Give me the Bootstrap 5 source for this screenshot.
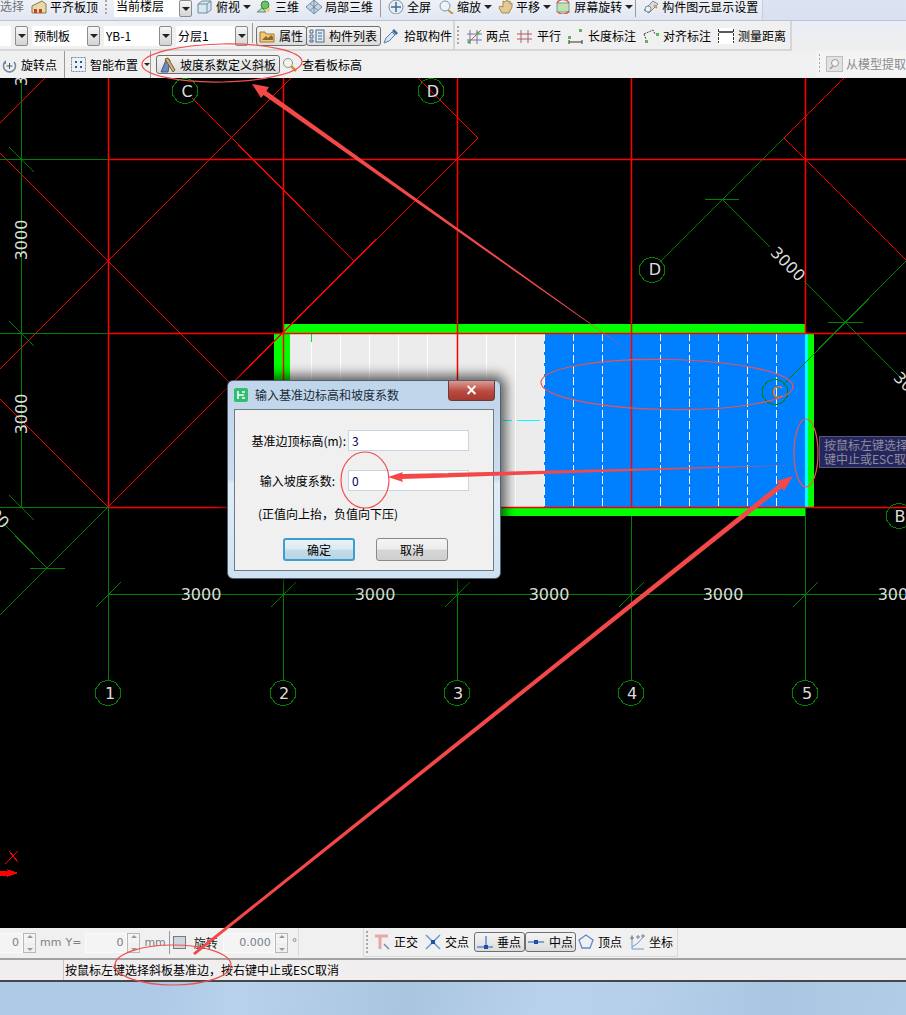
<!DOCTYPE html>
<html lang="zh">
<head>
  <meta charset="utf-8">
  <title>输入基准边标高和坡度系数</title>
  <link href="https://cdn.jsdelivr.net/npm/bootstrap@5.3.0/dist/css/bootstrap.min.css" rel="stylesheet">
  <style>
    html, body { height: 1015px; overflow: hidden; }
    body { background: #000; font: 12px/16px "Noto Sans CJK SC", "DejaVu Sans", sans-serif; color: #000; }
    .app-page { position: relative; height: 1015px; width: 906px; }
    .tb-row { display: flex; flex-shrink: 0; white-space: nowrap; overflow: hidden; }
    .tb-row svg { flex-shrink: 0; display: block; }
    .tb-row > *, .tb-one-bar > *, .tb-two-a > *, .tb-two-b > *, .bottom-left > *, .bottom-right > * { flex-shrink: 0; }
    .tb-one { height: 21px; background: linear-gradient(#dde3f2, #d9e0f0); border-bottom: 1px solid #b9c3da; }
    .tb-one-bar { width: 763px; height: 20px; display: flex; gap: 7px; background: linear-gradient(#eff1f6, #e1e6f2); border-right: 1px solid #c6cde0; }
    .tb-one-bar > * { height: 14px; line-height: 12px; }
    .tb-two { height: 30px; background: linear-gradient(#eaedf5, #efefef); }
    .tb-two-a { display: flex; align-items: center; gap: 4px; width: 453px; padding-top: 2px; background: #f0f0f0; border-bottom: 2px solid #d6d6d6; }
    .tb-two-b { display: flex; align-items: center; gap: 7px; width: 339px; padding-top: 2px; background: #f0f0f0; border: solid #d6d6d6; border-width: 0 2px 2px 2px; }
    .tb-three { height: 27px; background: #f0f0f0; align-items: center; gap: 7px; }
    .tb-three-right { height: 26px; width: 90px; background: #f4f4f4; display: flex; align-items: center; gap: 3px; color: #8a8a8a; align-self: flex-start; }
    .tool-item { display: flex; align-items: center; gap: 3px; }
    .tool-on { display: flex; align-items: center; gap: 3px; height: 20px; padding: 0 2px; border: 1px solid #6f6f6f; border-radius: 3px; background: linear-gradient(#f4f4f4, #dcdcdc); }
    .tool-grip { width: 2px; align-self: stretch; margin: 3px 0; background: repeating-linear-gradient(#a8a8a8 0 2px, transparent 2px 4px); }
    .tool-sep { width: 1px; align-self: stretch; margin: 3px 0; background: #9a9a9a; }
    .combo-box { display: flex; align-items: center; padding-left: 2px; background: #fff; height: 20px; }
    .combo-arrow { display: flex; align-items: center; justify-content: center; width: 13px; height: 20px; border: 1px solid #8c8c8c; border-radius: 2px; background: linear-gradient(#f6f6f6, #d4d4d4); }
    .caret-down { width: 0; height: 0; border: 4px solid transparent; border-top: 4px solid #222; border-bottom: 0; }
    .cad-area { position: relative; height: 850px; flex-shrink: 0; background: #000; overflow: hidden; }
    .cad-area > svg { display: block; shape-rendering: crispEdges; }
    .cad-area > svg .beam-line { shape-rendering: geometricPrecision; stroke-width: 1.500; }
    .cad-label { font: 16px "DejaVu Sans", sans-serif; fill: #dcdcdc; }
    .tip-box { position: absolute; left: 819px; top: 358px; width: 100px; height: 32px; padding: 1px 4px; background: #26265e; border: 1px solid #55557e; color: #8d8d9c; line-height: 14px; white-space: nowrap; overflow: hidden; }
    .dlg-window { position: absolute; left: 227px; top: 302px; width: 274px; height: 199px; padding: 0 6px 7px; display: flex; flex-direction: column; border-radius: 6px; border: 1px solid #50606f; background: linear-gradient(#bfd5ea, #cbdeef 50%, #e0edf7 52%, #cfe2f2); box-shadow: 0 0 12px 5px rgba(0, 0, 0, .6); }
    .dlg-title { height: 28px; display: flex; align-items: center; gap: 7px; flex-shrink: 0; color: #1a2a3a; }
    .dlg-close { width: 47px; height: 20px; margin-left: auto; margin-right: -1px; align-self: flex-start; display: flex; align-items: center; justify-content: center; color: #fff; font: bold 15px/1 "DejaVu Sans", sans-serif; border: 1px solid #6c3a38; border-top: 0; border-radius: 0 0 4px 4px; background: linear-gradient(#dd9a94, #b84a40 55%, #a63a30); }
    .dlg-panel { flex-grow: 1; padding-top: 20px; background: #f0f0f0; border: 1px solid #6f7b85; }
    .dlg-line { display: flex; align-items: center; gap: 2px; height: 21px; margin-bottom: 19px; }
    .dlg-label { width: 111px; text-align: right; white-space: nowrap; }
    .dlg-label-short { padding-right: 11px; }
    .dlg-input.form-control { width: 121px; height: 21px; min-height: 0; padding: 0 3px; font-size: 12px; border-radius: 0; border: 1px solid #c8d6e4; color: #00005a; box-shadow: none; }
    .dlg-note { margin: -4px 0 0 23px; height: 16px; }
    .dlg-buttons { display: flex; gap: 21px; margin: 16px 0 0 48px; }
    .dlg-btn.btn { width: 72px; height: 23px; padding: 0; font-size: 12px; line-height: 20px; color: #000; border-radius: 3px; border: 1px solid #8a8a8a; background: linear-gradient(#f4f4f4, #ececec 48%, #d6d6d6 52%, #cfcfcf); }
    .dlg-btn-main.btn { border-color: #3c9ed2; border-width: 2px; background: linear-gradient(#e8f2f8, #dceaf3 48%, #c6dbe8 52%, #bcd4e4); line-height: 18px; }
    .bottom-bar { height: 30px; flex-shrink: 0; background: #f0f0f0; align-items: center; gap: 0; color: #7a8088; font-family: "DejaVu Sans", sans-serif; }
    .bottom-left { display: flex; align-items: center; width: 299px; height: 29px; font-size: 11px; border-right: 1px solid #dadada; align-self: flex-start; }
    .num-box { height: 20px; background: #f4f4f4; border: 1px solid #fbfbfb; text-align: right; padding-right: 3px; line-height: 18px; }
    .spin-box { width: 13px; height: 20px; border: 1px solid #b8b8b8; background: linear-gradient(#f4f4f4 0 48%, #b8b8b8 48% 52%, #f0f0f0 52%); position: relative; }
    .spin-box::before, .spin-box::after { content: ""; position: absolute; left: 3px; border: 3px solid transparent; }
    .spin-box::before { top: 1px; border-bottom-color: #9a9a9a; border-top: 0; }
    .spin-box::after { bottom: 1px; border-top-color: #9a9a9a; border-bottom: 0; }
    .check-box.form-check-input { width: 13px; height: 13px; margin: 0 8px 0 3px; border-radius: 0; border: 1px solid #7a7a7a; background: #cfd6e0; }
    .bottom-rotate { font-family: "Noto Sans CJK SC", sans-serif; font-size: 12px; color: #222; }
    .bottom-right { display: flex; align-items: center; width: 315px; height: 29px; margin-left: 64px; border: solid #dadada; border-width: 0 1px 1px 1px; color: #000; font-family: "Noto Sans CJK SC", sans-serif; align-self: flex-start; }
    .status-bar { height: 24px; flex-shrink: 0; display: flex; background: #f0eeee; border-top: 2px solid #a2a2a2; border-bottom: 2px solid #474747; white-space: nowrap; }
    .status-first { width: 64px; border-right: 1px solid #c8c8c8; }
    .status-text { padding-left: 1px; line-height: 20px; }
    .desktop-strip { flex-grow: 1; background: linear-gradient(100deg, #aecae6 0 18%, #b8d2ec 26%, #aac5e0 45%, #b8d2ec 60%, #b6d0ea 70%, #aac6e2 85%, #b0cce6); }
    .note-layer { position: absolute; left: 0; top: 0; pointer-events: none; }
  </style>
</head>
<body>
<div class="app-page d-flex flex-column">

  <!-- top toolbars -->
  <div class="tb-row tb-one">
    <div class="tb-one-bar">
      <span class="text-secondary">选择</span>
      <span class="tool-item"><svg width="16" height="14" viewBox="0 0 16 14"><path d="M1 13V6L11 1l4 3v9z" fill="#e8d9a8" stroke="#8a7a4a"/><path d="M3 9h3v4H3zM8 9h3v4H8z" fill="#c9402a"/></svg><span>平齐板顶</span></span>
      <span class="tool-grip m-0"></span>
      <span class="combo-box" style="width:65px;height:17px;align-items:flex-start">当前楼层</span>
      <span class="combo-arrow" style="height:17px;margin-left:-7px"><span class="caret-down"></span></span>
      <span class="tool-item" style="margin-left:-2px"><svg width="16" height="14" viewBox="0 0 16 14"><path d="M1 4l4-3h9v9l-4 3H1z" fill="#d8e6ee" stroke="#6d8ea3"/><path d="M1 4h9v9M10 4l4-3" fill="none" stroke="#6d8ea3"/></svg><span>俯视</span><span class="caret-down"></span></span>
      <span class="tool-item" style="margin-left:-2px"><svg width="16" height="14" viewBox="0 0 16 14"><circle cx="9" cy="5" r="4" fill="#6cc26a" stroke="#3b8a3c"/><path d="M1 12l5-4 4 4z" fill="#b9d9b0" stroke="#6a8a6a"/><circle cx="12" cy="10" r="2" fill="#f2d060"/></svg><span>三维</span></span>
      <span class="tool-item"><svg width="16" height="14" viewBox="0 0 16 14"><path d="M8 0l8 7-8 7-8-7z" fill="#c6d6e6" stroke="#6f8aa6"/><path d="M4 3.500l8 7M12 3.500l-8 7M8 0v14" stroke="#6f8aa6" fill="none"/></svg><span>局部三维</span></span>
      <span class="tool-sep m-0" style="height:17px"></span>
      <span class="tool-item"><svg width="16" height="14" viewBox="0 0 16 14"><circle cx="8" cy="7" r="7" fill="#e6edf3" stroke="#7f93a6"/><path d="M8 2v10M3 7h10" stroke="#3f6a9c" stroke-width="1.500"/></svg><span>全屏</span></span>
      <span class="tool-item"><svg width="16" height="14" viewBox="0 0 16 14"><circle cx="7" cy="6" r="5" fill="#eef3f7" stroke="#8096aa"/><path d="M10 10l5 4" stroke="#c49a3c" stroke-width="2"/></svg><span>缩放</span><span class="caret-down"></span></span>
      <span class="tool-item" style="margin-left:-2px"><svg width="16" height="14" viewBox="0 0 16 14"><path d="M2 8l3 5h7l3-6V3l-2 1V1l-2 1-1-2-2 2-2-1v6L3 6z" fill="#e3c995" stroke="#a58a55"/></svg><span>平移</span><span class="caret-down"></span></span>
      <span class="tool-item" style="margin-left:-3px"><svg width="16" height="14" viewBox="0 0 16 14"><rect x="2" y="3" width="12" height="9" fill="#bfe3a8" stroke="#6b9ab8"/><path d="M2 3a7 7 0 0 1 12 0M14 11a7 7 0 0 1-11 1" fill="none" stroke="#e25a3c" stroke-width="1.500"/></svg><span>屏幕旋转</span><span class="caret-down"></span></span>
      <span class="tool-sep m-0" style="height:17px;margin-left:-5px!important"></span>
      <span class="tool-item"><svg width="16" height="14" viewBox="0 0 16 14"><path d="M1 10l9-9 5 3-9 9z" fill="#d6dde6" stroke="#7e8a98"/><circle cx="5" cy="9" r="3" fill="#f0f0f0" stroke="#7e8a98"/><path d="M11 5l3 3" stroke="#d99a3a" stroke-width="2"/></svg><span>构件图元显示设置</span></span>
    </div>
  </div>

  <div class="tb-row tb-two">
    <div class="tb-two-a">
      <span class="combo-box" style="width:11px"></span>
      <span class="combo-arrow"><span class="caret-down"></span></span>
      <span class="combo-box" style="width:55px">预制板</span>
      <span class="combo-arrow" style="margin-left:-4px"><span class="caret-down"></span></span>
      <span class="combo-box" style="width:55px">YB-1</span>
      <span class="combo-arrow" style="margin-left:-4px"><span class="caret-down"></span></span>
      <span class="combo-box" style="width:59px">分层1</span>
      <span class="combo-arrow" style="margin-left:-4px"><span class="caret-down"></span></span>
      <span class="tool-sep m-0" style="height:20px"></span>
      <span class="tool-on" style="margin-left:-1px;gap:4px;width:51px"><svg width="16" height="14" viewBox="0 0 16 14"><path d="M1 3h5l1 2h8v8H1z" fill="#f0c878" stroke="#a8792c"/><path d="M3 11l4-4 2 2 3-3 2 2v3z" fill="#8a6a2a"/></svg>属性</span>
      <span class="tool-on" style="margin-left:-5px;width:75px;gap:4px"><svg width="16" height="14" viewBox="0 0 16 14"><path d="M1 1h3v3H1zM1 6h3v3H1zM1 11h3v2H1z" fill="none" stroke="#4a6a8c"/><rect x="7" y="1" width="8" height="12" fill="#dfe9f2" stroke="#4a6a8c"/><path d="M9 4h4M9 7h4M9 10h4" stroke="#4a6a8c"/></svg>构件列表</span>
      <span class="tool-item" style="margin-left:-2px;gap:5px"><svg width="16" height="16" viewBox="0 0 16 16"><path d="M1 15l2-5 6-6 3 3-6 6z" fill="#d9e6f2" stroke="#5c7ea6"/><path d="M9 3l2-2 4 4-2 2z" fill="#3a6ca8"/></svg>拾取构件</span>
    </div>
    <div class="tb-two-b">
      <span class="tool-grip" style="margin-left:2px"></span>
      <span class="tool-item" style="margin-left:1px;gap:4px"><svg width="15" height="15" viewBox="0 0 15 15"><path d="M3 1v14M10 1v14M0 5h15M0 11h15" stroke="#6c78a8" fill="none"/><path d="M1 14L14 1" stroke="#d05a4a"/><circle cx="2" cy="13" r="1.600" fill="#5aa84a"/><circle cx="11" cy="4" r="1.600" fill="#5aa84a"/></svg>两点</span>
      <span class="tool-item" style="gap:5px"><svg width="15" height="15" viewBox="0 0 15 15"><path d="M4 1v13M11 1v13" stroke="#6c78a8"/><path d="M0 5h15M0 10h15" stroke="#c8504a"/></svg>平行</span>
      <span class="tool-item" style="gap:5px"><svg width="15" height="15" viewBox="0 0 15 15"><path d="M1 11v4M14 11v4M1 13h13" stroke="#333" fill="none"/><rect x="0" y="7" width="3" height="3" fill="#5cb85c"/><rect x="11" y="0" width="3" height="3" fill="#5cb85c"/></svg>长度标注</span>
      <span class="tool-item"><svg width="17" height="15" viewBox="0 0 17 15"><rect x="2" y="11" width="3" height="3" fill="#5cb85c"/><rect x="13" y="4" width="3" height="3" fill="#5cb85c"/><path d="M1 5l2 5M1 5l9-4 2 4" stroke="#444" fill="none" stroke-dasharray="2 1"/></svg>对齐标注</span>
      <span class="tool-item" style="gap:4px"><svg width="16" height="16" viewBox="0 0 16 16"><rect width="16" height="16" fill="#fff"/><path d="M.5 1v14M15.500 1v14" stroke="#333" stroke-dasharray="3 1"/><path d="M1 4h14" stroke="#222" stroke-width="1.500"/></svg>测量距离</span>
    </div>
  </div>

  <div class="tb-row tb-three">
    <span class="tool-item" style="margin-left:2px;gap:4px"><svg width="15" height="16" viewBox="0 0 15 16"><path d="M3 5a6 6 0 1 0 9 0" fill="none" stroke="#6c86a8" stroke-width="1.500"/><path d="M7.500 6v6M4.500 9h6" stroke="#555"/><path d="M1 6l3-3v4z" fill="#6c86a8"/></svg>旋转点</span>
    <span class="tool-sep m-0"></span>
    <span class="tool-item" style="margin-left:-1px;gap:4px"><svg width="15" height="15" viewBox="0 0 15 15"><rect x=".5" y=".5" width="14" height="14" fill="#eef2f6" stroke="#7a8a9a" stroke-dasharray="2 1"/><path d="M4 4h2v2H4zM9 4h2v2H9zM4 9h2v2H4zM9 9h2v2H9z" fill="#2a5a8c"/></svg>智能布置<span class="caret-down" style="margin-left:2px;border-width:3px 3px 0"></span></span>
    <span class="tool-sep m-0" style="margin-left:-7px!important"></span>
    <span class="tool-on" style="width:124px;height:19px;padding:0 3px;gap:4px;margin-left:-2px"><svg width="16" height="16" viewBox="0 0 16 16"><path d="M1 15L6 3h4l-2 12z" fill="#6c8cc0" stroke="#3a5a8c"/><path d="M5 2l3-1 7 12-2 2z" fill="#d8b078" stroke="#7a5a2a"/></svg>坡度系数定义斜板</span>
    <span class="tool-item" style="margin-left:-5px;gap:4px"><svg width="16" height="16" viewBox="0 0 16 16"><circle cx="6" cy="6" r="4.500" fill="#f4f4e4" stroke="#7f93a6"/><path d="M9 9l5 5" stroke="#c49a3c" stroke-width="2.500"/></svg>查看板标高</span>
    <div class="tb-three-right ms-auto">
      <span class="tool-grip" style="margin-left:3px"></span>
      <svg style="margin-left:3px" width="17" height="16" viewBox="0 0 17 16"><rect x=".5" y=".5" width="16" height="15" fill="#e2e2e2" stroke="#bdbdbd"/><circle cx="9" cy="7" r="3.500" fill="#f4f4f4" stroke="#9a9a9a"/><path d="M7 10l-3 3" stroke="#9a9a9a" stroke-width="1.500"/></svg>
      <span>从模型提取</span>
    </div>
  </div>

  <!-- drawing area, svg uses screen coordinates -->
  <div class="cad-area">
    <svg width="906" height="850" viewBox="0 78 906 850">
      <defs>
        <polygon id="axis-mark" points="0,-13 7.600,-10.500 12.400,-4 12.400,4 7.600,10.500 0,13 -7.600,10.500 -12.400,4 -12.400,-4 -7.600,-10.500" fill="none" stroke="#008000"/>
        <path id="tick-up" d="M-12.500,12.500L12.500,-12.500" stroke="#008000" fill="none"/>
        <path id="tick-down" d="M-12.500,-12.500L12.500,12.500" stroke="#008000" fill="none"/>
      </defs>

      <!-- slab -->
      <rect x="283" y="324" width="522" height="9" fill="#00ff00"/>
      <rect x="274" y="333" width="16" height="183" fill="#00ff00"/>
      <rect x="274" y="507" width="531" height="9" fill="#00ff00"/>
      <rect x="808" y="333" width="6" height="174" fill="#00ff00"/>
      <rect x="805" y="333" width="3" height="174" fill="#00ffff"/>
      <rect x="290" y="333" width="254" height="174" fill="#ececec"/>
      <rect x="544" y="333" width="261" height="174" fill="#0080ff"/>
      <path d="M311.500 333v174M340.500 333v174M369.500 333v174M398.500 333v174M427.500 333v174M486.500 333v174M515.500 333v174" stroke="#fff" fill="none"/>
      <path d="M544.500 333v174M573.500 333v174M602.500 333v174M660.500 333v174M689.500 333v174M718.500 333v174M747.500 333v174M776.500 333v174" stroke="#fff" stroke-dasharray="8 3" fill="none"/>
      <path d="M311.500 333v9" stroke="#00e040"/>
      <path d="M503 420.500h9M517 420.500h23" stroke="#00ffff" stroke-width="1.500"/>

      <!-- red beams -->
      <path class="beam-line" d="M108.500 78V507M283.500 78V507M457.500 78V507M631.500 78V507M805.500 78V333M108 159.500H906M108 333.500H906M108 507.500H906" stroke="#ff0000" fill="none"/>
      <path d="M0 123L45 78M0 153L230 383M0 369L291 78M192 98L354 261M108 507L478 138L418 78M844 78L784 138L906 260M0 399L108 507" stroke="#ff0000" fill="none"/>

      <!-- green axes -->
      <path d="M21.500 78V507M0 159.500H108M0 333.500H108M0 507.500H108M108 594.500H906M108.500 507V680M283.500 516V680M457.500 580V680M631.500 516V680M805.500 507V680" stroke="#008000" fill="none"/>
      <path d="M108 507L0 615M3 523L47 568M30 568.500H65M784 138L661 261M722 199L770 247M804 281L900 377M906 261L785 383M705 199.500H739M828 322.500H863" stroke="#008000" fill="none"/>
      <use href="#tick-down" x="21.500" y="159.500"/>
      <use href="#tick-down" x="21.500" y="333.500"/>
      <use href="#tick-down" x="21.500" y="507.500"/>
      <use href="#tick-up" x="108.500" y="594.500"/>
      <use href="#tick-up" x="283.500" y="594.500"/>
      <use href="#tick-up" x="457.500" y="594.500"/>
      <use href="#tick-up" x="631.500" y="594.500"/>
      <use href="#tick-up" x="805.500" y="594.500"/>

      <use href="#axis-mark" x="108" y="693"/>
      <use href="#axis-mark" x="283" y="693"/>
      <use href="#axis-mark" x="457" y="693"/>
      <use href="#axis-mark" x="631" y="693"/>
      <use href="#axis-mark" x="805" y="693"/>
      <use href="#axis-mark" x="185" y="91"/>
      <use href="#axis-mark" x="431" y="91"/>
      <use href="#axis-mark" x="652" y="270"/>
      <use href="#axis-mark" x="775" y="392"/>
      <use href="#axis-mark" x="899" y="516"/>

      <g class="cad-label" text-anchor="middle">
        <text x="110" y="699">1</text>
        <text x="284" y="699">2</text>
        <text x="458" y="699">3</text>
        <text x="632" y="699">4</text>
        <text x="807" y="699">5</text>
        <text x="187" y="97">C</text>
        <text x="433" y="97">D</text>
        <text x="655" y="275">D</text>
        <text x="777" y="398" style="fill:#e07820">C</text>
        <text x="900" y="522">B</text>
        <text x="201" y="600">3000</text>
        <text x="375" y="600">3000</text>
        <text x="549" y="600">3000</text>
        <text x="723" y="600">3000</text>
        <text x="898" y="600">3000</text>
        <text transform="translate(27 240) rotate(-90)">3000</text>
        <text transform="translate(27 414) rotate(-90)">3000</text>
        <text transform="translate(27 66) rotate(-90)">3000</text>
        <text transform="translate(784 268) rotate(45)">3000</text>
        <text transform="translate(907 393) rotate(45)">3000</text>
        <text transform="translate(-12 515) rotate(45)">3000</text>
      </g>

      <path d="M9 851L18 862M18 851L5 864" stroke="#ff0000" fill="none"/>
      <path d="M0 870.500H8L7 869L18 873L7 877L8 875.500H0z" fill="#ff0000"/>
    </svg>

    <div class="tip-box">按鼠标左键选择<br>键中止或ESC取消</div>

    <!-- dialog -->
    <div class="dlg-window">
      <div class="dlg-title">
        <svg width="14" height="14" viewBox="0 0 14 14"><rect width="14" height="14" rx="2" fill="#2fbf6f"/><path d="M4 3v8M4 7h6M8 4h3M8 10h3" stroke="#fff" stroke-width="1.500" fill="none"/></svg>
        <span>输入基准边标高和坡度系数</span>
        <span class="dlg-close">×</span>
      </div>
      <form class="dlg-panel">
        <div class="dlg-line">
          <label class="dlg-label">基准边顶标高(m):</label>
          <input class="form-control dlg-input" type="text" value="3">
        </div>
        <div class="dlg-line">
          <label class="dlg-label dlg-label-short">输入坡度系数:</label>
          <input class="form-control dlg-input" type="text" value="0">
        </div>
        <div class="dlg-note">(正值向上抬，负值向下压)</div>
        <div class="dlg-buttons">
          <button type="button" class="btn dlg-btn dlg-btn-main">确定</button>
          <button type="button" class="btn dlg-btn">取消</button>
        </div>
      </form>
    </div>
  </div>

  <!-- coordinates and snap toolbar -->
  <div class="tb-row bottom-bar">
    <div class="bottom-left">
      <span class="num-box" style="width:23px;border-left:0">0</span>
      <span class="spin-box"></span>
      <span class="ms-1">mm</span>
      <span style="margin-left:4px">Y=</span>
      <span class="num-box" style="width:42px;margin-left:4px">0</span>
      <span class="spin-box"></span>
      <span class="ms-1">mm</span>
      <span class="tool-sep" style="margin-left:3px"></span>
      <span class="check-box form-check-input"></span>
      <span class="bottom-rotate">旋转</span>
      <span class="num-box" style="width:52px;margin-left:5px">0.000</span>
      <span class="spin-box"></span>
      <span class="ms-1">°</span>
    </div>
    <div class="bottom-right">
      <span class="tool-grip" style="margin-left:2px"></span>
      <span class="tool-item" style="margin-left:7px"><svg width="16" height="16" viewBox="0 0 16 16"><path d="M0 2h13M5 2v13" stroke="#e8a8a8" stroke-width="3" fill="none"/><path d="M9 10l5 5" stroke="#7a8a9a" stroke-width="1.500"/></svg>正交</span>
      <span class="tool-item" style="margin-left:7px;gap:4px"><svg width="16" height="16" viewBox="0 0 16 16"><path d="M1 1l14 14M15 1L1 15" stroke="#6c9ad8" stroke-width="1.500"/><rect x="6" y="6" width="4" height="4" fill="#1f4fa0"/></svg>交点</span>
      <span class="tool-on" style="margin-left:5px;width:51px;gap:4px"><svg width="16" height="16" viewBox="0 0 16 16"><path d="M0 13h16M9 2v13" stroke="#5c8ad0" stroke-width="1.500"/><rect x="7" y="11" width="4" height="4" fill="#1f4fa0"/></svg>垂点</span>
      <span class="tool-on" style="margin-left:0;width:51px;gap:5px"><svg width="16" height="16" viewBox="0 0 16 16"><path d="M0 8h16" stroke="#5c8ad0" stroke-width="1.500"/><rect x="6" y="6" width="4" height="4" fill="#1f4fa0"/></svg>中点</span>
      <span class="tool-item" style="margin-left:2px;gap:4px"><svg width="16" height="16" viewBox="0 0 16 16"><path d="M8 1l7 5-3 8H4L1 6z" fill="none" stroke="#5c8ad0" stroke-width="1.300"/></svg>顶点</span>
      <span class="tool-item" style="margin-left:7px;gap:4px"><svg width="16" height="16" viewBox="0 0 16 16"><path d="M3 1v14h12M3 13l6-4 5-6" stroke="#6c9ad8" fill="none"/><circle cx="3" cy="4" r="1.200" fill="none" stroke="#777"/><circle cx="14" cy="2" r="1.200" fill="none" stroke="#777"/><circle cx="9" cy="3" r="1.200" fill="none" stroke="#777"/></svg>坐标</span>
    </div>
  </div>

  <div class="status-bar">
    <div class="status-first"></div>
    <div class="status-text">按鼠标左键选择斜板基准边，按右键中止或ESC取消</div>
  </div>
  <div class="desktop-strip"></div>

  <!-- hand drawn red notes over everything -->
  <svg class="note-layer" width="906" height="1015" viewBox="0 0 906 1015">
    <g fill="none" stroke="#f05050" stroke-width="1.200">
      <ellipse cx="222" cy="63" rx="80" ry="19" transform="rotate(-1 222 63)"/>
      <ellipse cx="667" cy="384.500" rx="126" ry="25" transform="rotate(1 667 384)"/>
      <ellipse cx="806" cy="453" rx="12" ry="34"/>
      <ellipse cx="365" cy="480" rx="24" ry="28"/>
      <ellipse cx="173" cy="965" rx="58" ry="20"/>
    </g>
    <g fill="#f44848">
      <polygon points="640,359 266.500,91 269,87 252,84 261,98 263.500,95"/>
      <polygon points="800,465 402,474 403,472 388,477 403,482 402,479"/>
      <polygon points="193,953 195,955 782,488 784,491 793,476 777,481 779,484"/>
    </g>
  </svg>
</div>
<script src="https://cdn.jsdelivr.net/npm/bootstrap@5.3.0/dist/js/bootstrap.bundle.min.js"></script>
</body>
</html>
